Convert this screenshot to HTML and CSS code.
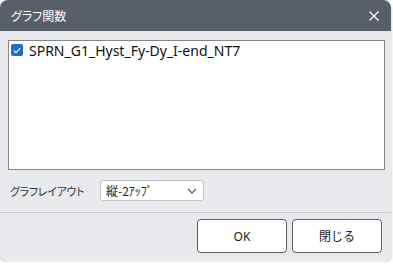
FILE: index.html
```html
<!DOCTYPE html>
<html lang="ja">
<head>
    <meta charset="UTF-8">
    <title>グラフ関数</title>
    <link rel="stylesheet" href="styles.css">
</head>
<body>
    <div class="dialog">
        <div class="titlebar">
            <span class="title">グラフ関数</span>
            <svg class="close" width="10" height="10" viewBox="0 0 10 10">
                <path d="M0.5 0.5 L9.5 9.5 M9.5 0.5 L0.5 9.5" stroke="#fff" stroke-width="1.2" fill="none"/>
            </svg>
        </div>

        <div class="content">
            <div class="listbox">
                <div class="list-item">
                    <span class="checkbox">
                        <svg width="8" height="7" viewBox="0 0 8 7">
                            <path d="M0.8 3.6 L3 5.7 L7.2 1.2" stroke="#fff" stroke-width="1.2" fill="none"/>
                        </svg>
                    </span>
                    <span class="item-label">SPRN_G1_Hyst_Fy-Dy_I-end_NT7</span>
                </div>
            </div>

            <div class="layout-row">
                <span class="layout-label">グラフレイアウト</span>
                <div class="select">
                    <span>縦-2ｱｯﾌﾟ</span>
                    <svg width="10" height="6" viewBox="0 0 10 6">
                        <path d="M1 1 L5 5 L9 1" stroke="#666" stroke-width="1.3" fill="none"/>
                    </svg>
                </div>
            </div>
        </div>

        <div class="footer">
            <button class="btn">OK</button>
            <button class="btn">閉じる</button>
        </div>
    </div>
</body>
</html>
```

FILE: styles.css
```css
body {
    margin: 0;
    background: #ffffff;
    font-family: "Noto Sans", "Noto Sans CJK JP", sans-serif;
    overflow: hidden;
}

.dialog {
    width: 391px;
    height: 262px;
    background-color: #e9eaee;
    border-radius: 8px;
    overflow: hidden;
    display: flex;
    flex-direction: column;
    box-shadow: 0 1px 3px rgba(0, 0, 0, 0.25);
}

.titlebar {
    height: 31px;
    flex: none;
    background-color: #585f67;
    color: #ffffff;
    display: flex;
    align-items: center;
    justify-content: space-between;
    padding: 0 12px 0 11px;
}

.title {
    font-family: "Noto Sans CJK JP", sans-serif;
    font-size: 12px;
    font-feature-settings: "palt";
}

.content {
    padding: 9px 6px 0 8px;
}

.listbox {
    height: 124px;
    background-color: #ffffff;
    border: 1px solid #83868b;
    padding: 2px 2px;
}

.list-item {
    display: flex;
    align-items: center;
    gap: 6px;
    height: 14px;
}

.checkbox {
    width: 12px;
    height: 12px;
    border-radius: 2px;
    background-color: #1e6fc8;
    display: flex;
    align-items: center;
    justify-content: center;
}

.item-label {
    font-size: 14px;
    color: #111111;
}

.layout-row {
    display: flex;
    align-items: center;
    margin-top: 10px;
    height: 21px;
}

.layout-label {
    flex: none;
    white-space: nowrap;
    font-family: "Noto Sans CJK JP", sans-serif;
    font-size: 11px;
    letter-spacing: -0.3px;
    font-feature-settings: "palt";
    color: #333333;
    width: 90px;
    margin-left: 2px;
}

.select {
    width: 91px;
    height: 19px;
    background-color: #ffffff;
    border: 1px solid #c3c5ca;
    border-radius: 3px;
    display: flex;
    align-items: center;
    justify-content: space-between;
    padding: 0 6px 0 5px;
    font-family: "Noto Sans CJK JP", sans-serif;
    font-size: 12px;
    color: #222222;
}

.footer {
    margin-top: 11px;
    border-top: 1px solid #c9cacd;
    display: flex;
    justify-content: flex-end;
    gap: 5px;
    padding: 6px 9px 0 0;
}

.btn {
    width: 90px;
    height: 34px;
    background-color: #ffffff;
    border: 1px solid #5a5d62;
    border-radius: 4px;
    font-family: "Noto Sans", "Noto Sans CJK JP", sans-serif;
    font-size: 12px;
    color: #222222;
    padding: 0;
}
```
